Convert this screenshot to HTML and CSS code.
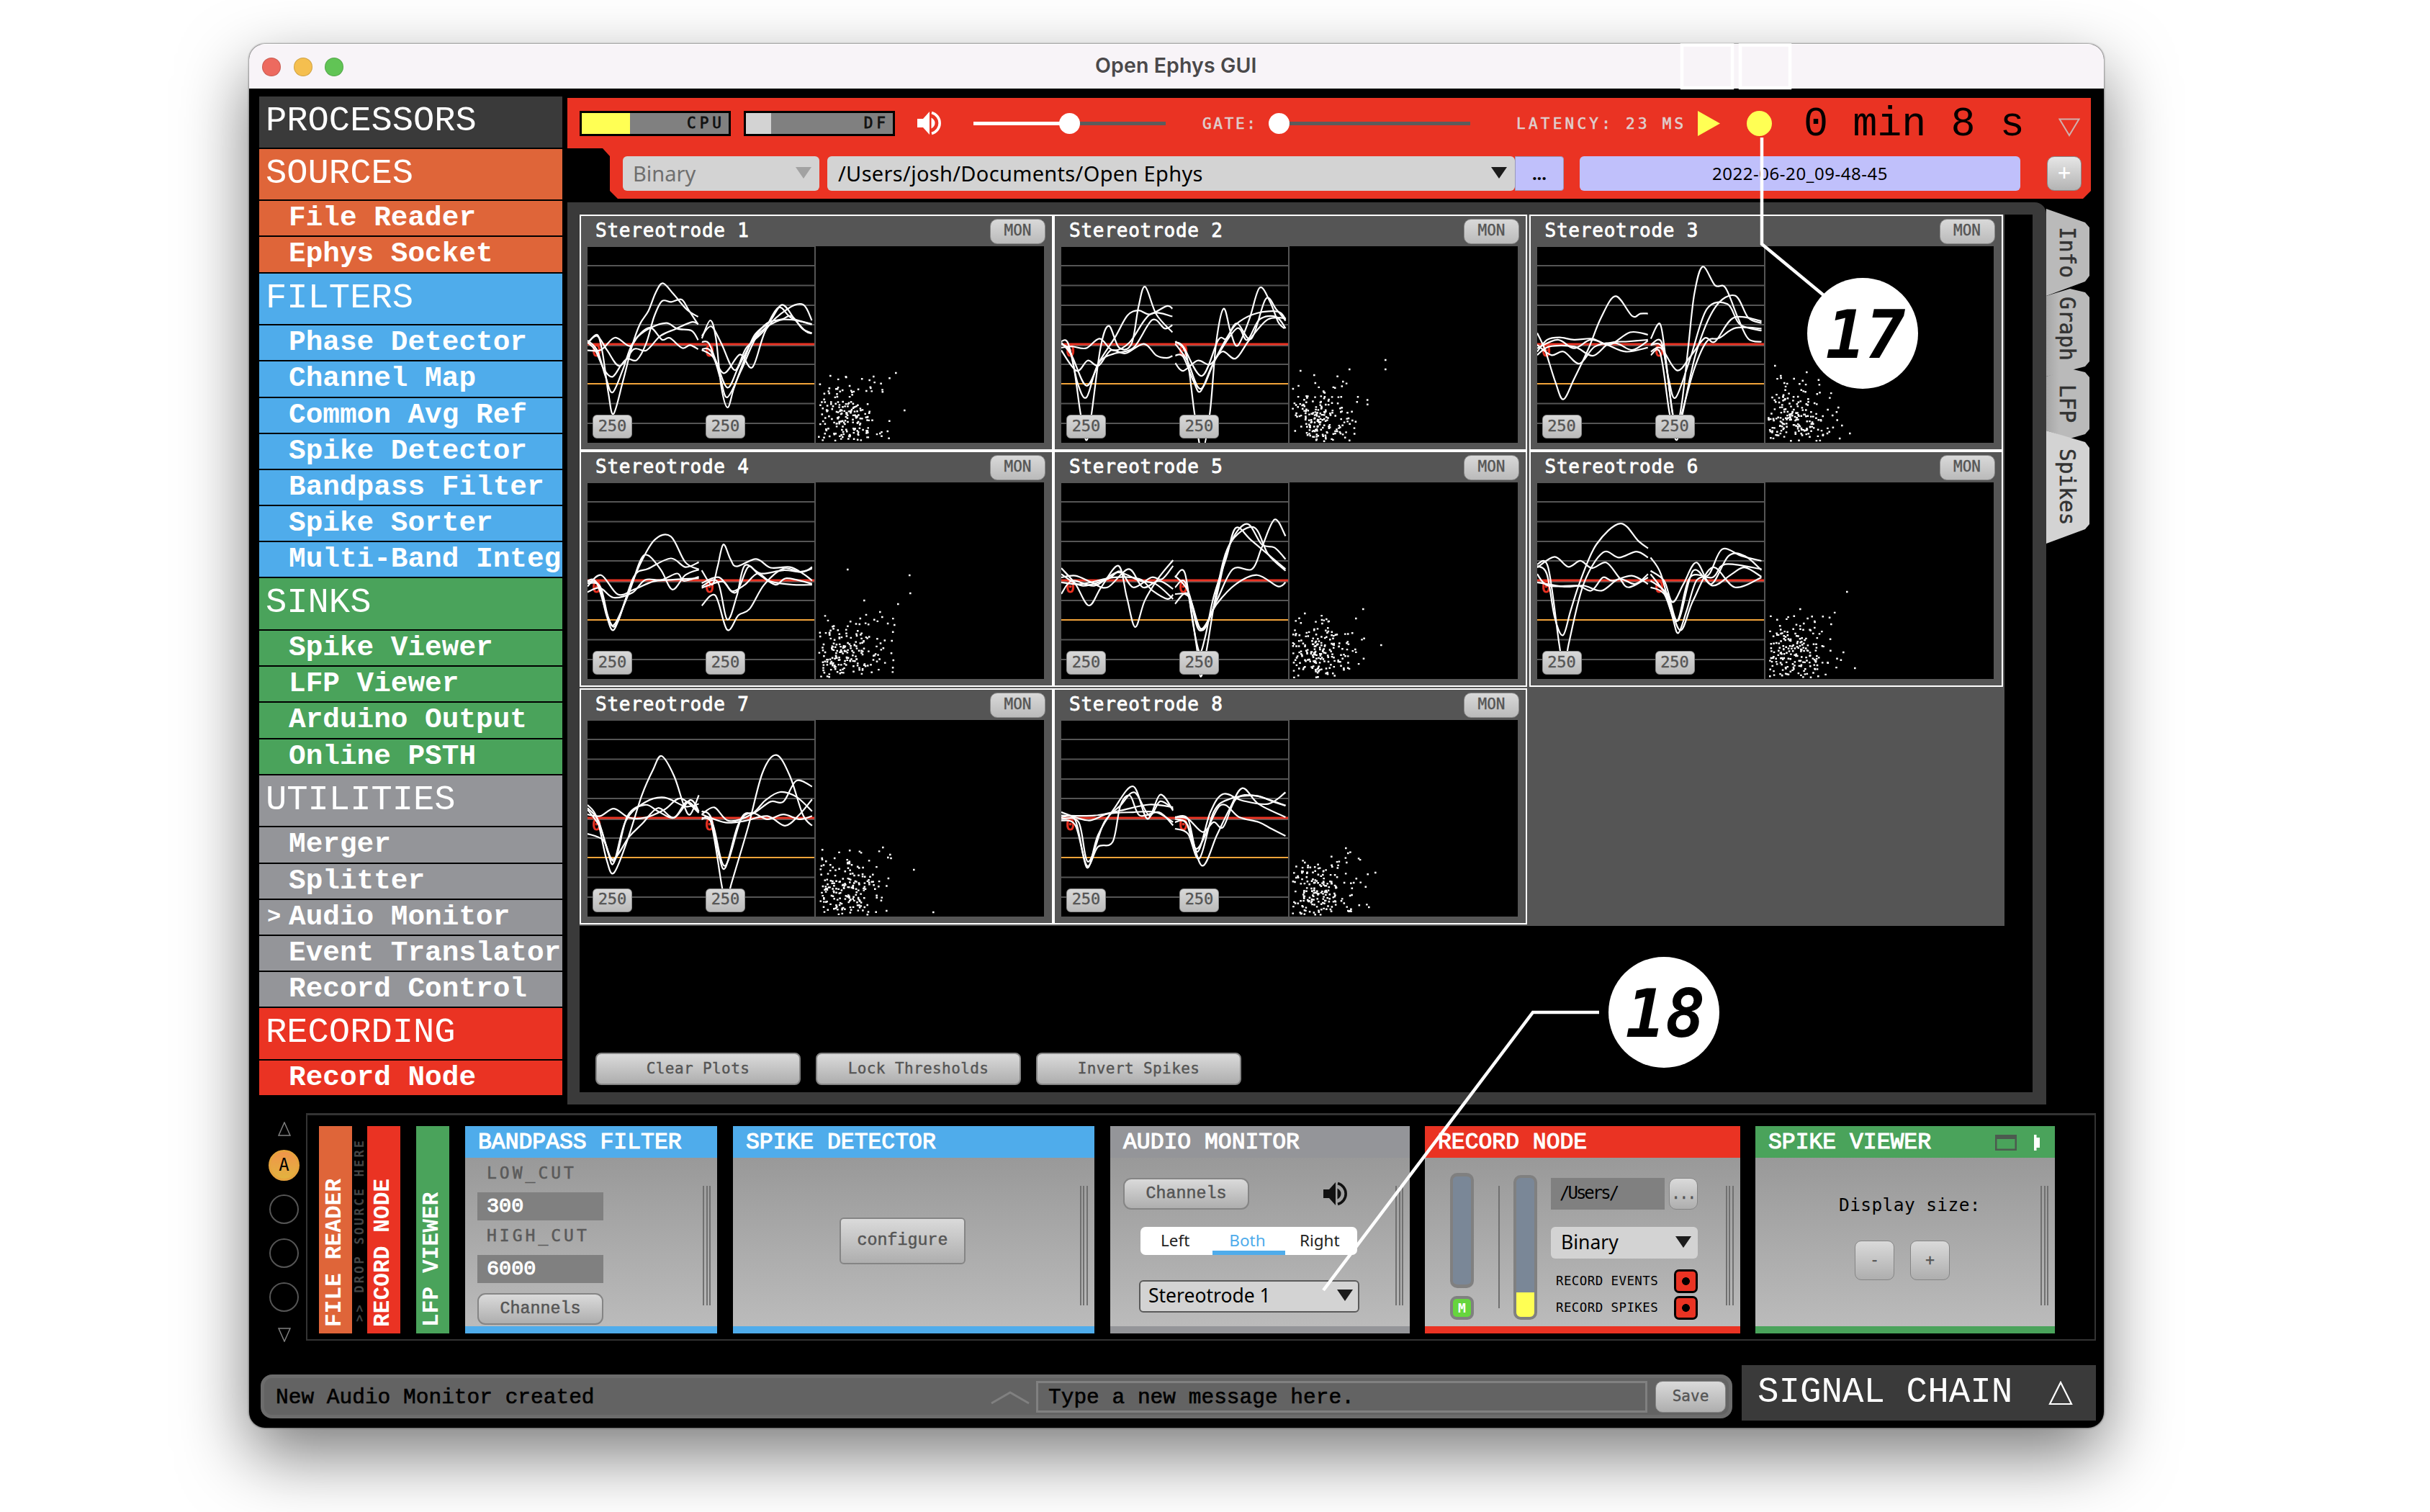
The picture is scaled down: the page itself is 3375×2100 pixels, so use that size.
FILE: index.html
```html
<!DOCTYPE html>
<html lang="en">
<head>
<meta charset="utf-8">
<title>Open Ephys GUI</title>
<link rel="stylesheet" href="styles.css">
</head>
<body>
<div class="window">
  <header class="titlebar">
    <span class="light close"></span><span class="light minimize"></span><span class="light zoom"></span>
    <h1 class="window-title">Open Ephys GUI</h1>
  </header>

  <div class="workspace">
    <nav class="processors">
      <div class="group heading">PROCESSORS</div>
      <div class="group sources">SOURCES</div>
      <div class="item sources">File Reader</div>
      <div class="item sources">Ephys Socket</div>
      <div class="group filters">FILTERS</div>
      <div class="item filters">Phase Detector</div>
      <div class="item filters">Channel Map</div>
      <div class="item filters">Common Avg Ref</div>
      <div class="item filters">Spike Detector</div>
      <div class="item filters">Bandpass Filter</div>
      <div class="item filters">Spike Sorter</div>
      <div class="item filters">Multi-Band Integ</div>
      <div class="group sinks">SINKS</div>
      <div class="item sinks">Spike Viewer</div>
      <div class="item sinks">LFP Viewer</div>
      <div class="item sinks">Arduino Output</div>
      <div class="item sinks">Online PSTH</div>
      <div class="group utilities">UTILITIES</div>
      <div class="item utilities">Merger</div>
      <div class="item utilities">Splitter</div>
      <div class="item utilities selected"><span class="caret">&gt;</span>Audio Monitor</div>
      <div class="item utilities">Event Translator</div>
      <div class="item utilities">Record Control</div>
      <div class="group recording">RECORDING</div>
      <div class="item recording">Record Node</div>
    </nav>

    <main class="main">
      <section class="control">
        <div class="control-row">
          <div class="meter cpu"><i class="meter-fill"></i>CPU</div>
          <div class="meter disk"><i class="meter-fill"></i>DF</div>
          <svg class="speaker" viewBox="0 0 34 34"><path d="M0 11h8l9-10v32L8 23H0z" fill="currentColor"/><path d="M19.500 9.500q5 2.500 5 7.500t-5 7.500z" fill="currentColor"/><path d="M20 2.500a15 15 0 0 1 0 29" fill="none" stroke="currentColor" stroke-width="3.600"/></svg>
          <div class="slider volume"><i class="knob"></i></div>
          <span class="tiny gate">GATE:</span>
          <div class="slider gate-slider"><i class="knob"></i></div>
          <span class="tiny latency">LATENCY: 23 MS</span>
          <svg class="play" viewBox="0 0 31 35"><path d="M0 0L31 17.500L0 35z" fill="#ffff54"/></svg>
          <i class="record"></i>
          <span class="clock">0 min 8 s</span>
          <svg class="collapse" viewBox="0 0 30 26"><path d="M1.500 1.500h27L15 24z" fill="none" stroke="#d0b0ac" stroke-width="2"/></svg>
        </div>
        <div class="control-row files">
          <div class="combo format">Binary<i class="arrow"></i></div>
          <div class="combo path">/Users/josh/Documents/Open Ephys<i class="arrow"></i></div>
          <div class="browse">...</div>
          <div class="filename">2022-06-20_09-48-45</div>
          <div class="add">+</div>
        </div>
      </section>

      <div class="viewer">
        <section class="canvas">
          <div class="plots" id="plots"></div>
          <div class="plot-actions">
            <button class="btn wide">Clear Plots</button>
            <button class="btn wide">Lock Thresholds</button>
            <button class="btn wide">Invert Spikes</button>
          </div>
        </section>
        <div class="tabs">
          <div class="tab info">Info</div>
          <div class="tab graph">Graph</div>
          <div class="tab lfp">LFP</div>
          <div class="tab spikes">Spikes</div>
        </div>
      </div>
    </main>
  </div>

  <section class="chain">
    <div class="chain-nav">
      <svg class="nav-arrow" viewBox="0 0 18 20"><path d="M9 1L17 19H1z"/></svg>
      <span class="slot active">A</span>
      <span class="slot"></span>
      <span class="slot"></span>
      <span class="slot"></span>
      <svg class="nav-arrow" viewBox="0 0 18 20"><path d="M1 1H17L9 19z"/></svg>
    </div>
    <div class="editors">
      <div class="strip sources">FILE READER</div>
      <div class="drop">&gt;&gt; DROP SOURCE HERE</div>
      <div class="strip recording">RECORD NODE</div>
      <div class="strip sinks lfp-strip">LFP VIEWER</div>

      <article class="editor bandpass">
        <h2 class="editor-title filters">BANDPASS FILTER</h2>
        <div class="editor-body">
          <div class="params">
            <label class="param-label">LOW_CUT</label>
            <div class="field">300</div>
            <label class="param-label second">HIGH_CUT</label>
            <div class="field">6000</div>
            <button class="btn techno channels">Channels</button>
          </div>
          <i class="grip"></i>
        </div>
        <div class="editor-foot filters"></div>
      </article>

      <article class="editor detector">
        <h2 class="editor-title filters">SPIKE DETECTOR</h2>
        <div class="editor-body">
          <button class="btn techno configure">configure</button>
          <i class="grip"></i>
        </div>
        <div class="editor-foot filters"></div>
      </article>

      <article class="editor monitor">
        <h2 class="editor-title utilities">AUDIO MONITOR</h2>
        <div class="editor-body">
          <div class="monitor-controls">
            <div class="monitor-top">
              <button class="btn techno channels">Channels</button>
              <svg class="speaker dark" viewBox="0 0 34 34"><path d="M0 11h8l9-10v32L8 23H0z" fill="currentColor"/><path d="M19.500 9.500q5 2.500 5 7.500t-5 7.500z" fill="currentColor"/><path d="M20 2.500a15 15 0 0 1 0 29" fill="none" stroke="currentColor" stroke-width="3.600"/></svg>
            </div>
            <div class="toggle"><span>Left</span><span class="on">Both</span><span>Right</span></div>
            <div class="combo electrode">Stereotrode 1<i class="arrow"></i></div>
          </div>
          <i class="grip"></i>
        </div>
        <div class="editor-foot utilities"></div>
      </article>

      <article class="editor recorder">
        <h2 class="editor-title recording">RECORD NODE</h2>
        <div class="editor-body">
          <div class="buffer-col"><div class="buffer main-buffer"></div><div class="monitor-m">M</div></div>
          <i class="rule"></i>
          <div class="buffer disk-buffer"></div>
          <div class="record-settings">
            <div class="path-row"><div class="record-path">/Users/</div><button class="btn dots">...</button></div>
            <div class="combo small-format">Binary<i class="arrow"></i></div>
            <div class="check-row"><span>RECORD EVENTS</span><i class="rec-toggle"></i></div>
            <div class="check-row last"><span>RECORD SPIKES</span><i class="rec-toggle"></i></div>
          </div>
          <i class="grip"></i>
        </div>
        <div class="editor-foot recording"></div>
      </article>

      <article class="editor spike-viewer">
        <h2 class="editor-title sinks">SPIKE VIEWER
          <svg class="view-icons" viewBox="0 0 64 22"><path d="M0 0h30v22H0z" fill="#4c5a4f"/><path d="M2.500 6h25v13.500h-25z" fill="#4aa35b"/><path d="M54 0h3.500v4h4.500v14h-4.500v4H54z" fill="#fff"/></svg>
        </h2>
        <div class="editor-body">
          <div class="display-size">
            <span class="size-label">Display size:</span>
            <div class="size-buttons"><button class="btn step">-</button><button class="btn step">+</button></div>
          </div>
          <i class="grip"></i>
        </div>
        <div class="editor-foot sinks"></div>
      </article>
    </div>
  </section>

  <footer class="bottom">
    <div class="messages">
      <span class="status">New Audio Monitor created</span>
      <svg class="chevron" viewBox="0 0 54 20"><path d="M1 18L27 3L53 18" fill="none" stroke="#808080" stroke-width="3"/></svg>
      <div class="message-input">Type a new message here.</div>
      <button class="btn save">Save</button>
    </div>
    <div class="signal-chain">SIGNAL CHAIN
      <svg class="expand" viewBox="0 0 34 34"><path d="M17 2L32 32H2z" fill="none" stroke="#fff" stroke-width="2.200"/></svg>
    </div>
  </footer>
</div>

<!-- numbered callouts drawn above the window -->
<svg class="callouts" viewBox="0 0 3375 2100">
  <g fill="none" stroke="#fff" stroke-width="4.500">
    <rect x="2336" y="62.500" width="70" height="59.500"/>
    <rect x="2417" y="62.500" width="69" height="59.500"/>
    <path d="M2447 191V339L2534 411"/>
    <path d="M1838 1792L2129 1406H2221"/>
  </g>
  <circle cx="2587" cy="463" r="77" fill="#fff"/>
  <circle cx="2311" cy="1406" r="77" fill="#fff"/>
  <text x="2591" y="497" class="callout-num">17</text>
  <text x="2313" y="1440" class="callout-num">18</text>
</svg>
<script src="plots.js"></script>
</body>
</html>
```
FILE: plots.js
```js
// Each electrode has its own plot units (view box) and the recent waveforms
// of its two channels, as x,y samples in those units.
const electrodes = [
  { box: [37, 159, 726, 816], far: [[110, 176], [79, 181], [19, 180], [41, 182], [75, 197], [122, 228]], traces: [
    '37,560 68,525 85,600 104,770 120,855 150,720 180,570 205,480 232,425 255,350 278,310 312,355 355,420 391,450',
    '37,548 68,590 95,700 117,765 150,670 182,560 235,495 275,545 300,538 340,580 365,568 391,585',
    '37,590 80,588 125,537 172,572 200,530 240,495 290,476 325,500 370,508 391,547',
    '37,556 62,590 90,670 117,700 145,650 165,625 195,630 225,560 250,450 275,385 305,388 338,378 360,420 391,482',
    '37,560 68,530 100,590 140,655 185,585 225,590 270,530 320,500 370,472 391,480',
    '403,540 430,465 448,540 465,740 485,828 505,750 530,660 570,530 620,470 660,400 700,460 735,510 755,520',
    '403,530 433,490 465,560 508,672 545,580 600,510 648,412 690,455 755,480',
    '403,555 425,560 450,640 485,745 520,660 565,550 610,478 660,460 690,447 725,500 755,518',
    '403,585 430,590 473,685 525,607 565,660 610,500 680,415 728,400 755,465',
    '403,588 440,620 463,710 485,785 530,670 580,530 640,470 690,462 755,482'] },
  { box: [425, 848, 549, 762], far: [[132, 158], [132, 171], [82, 171], [73, 188], [33, 179], [14, 173]], traces: [
    '425,1225 450,1270 472,1500 486,1600 498,1500 520,1240 540,1155 565,1240 595,1225 612,1080 628,1003 655,1110 694,1180',
    '425,1215 442,1225 465,1380 486,1433 512,1310 555,1200 585,1115 612,1095 640,1110 680,1078 694,1088',
    '425,1250 462,1330 489,1290 515,1310 545,1250 580,1262 625,1225 655,1270 680,1280 694,1272',
    '425,1240 450,1235 485,1242 518,1205 550,1250 590,1220 640,1110 694,1118',
    '425,1220 450,1270 486,1388 520,1290 555,1262 600,1240 645,1132 675,1165 694,1152',
    '701,1215 728,1270 748,1500 766,1640 785,1490 800,1220 818,1088 835,1180 852,1232 880,1130 905,1007 930,1060 950,1140 965,1165',
    '701,1220 720,1235 765,1350 805,1210 825,1205 850,1145 885,1205 920,1050 945,1090 968,1135',
    '701,1300 720,1330 755,1290 785,1305 815,1255 847,1282 880,1210 925,1130 968,1125',
    '701,1270 720,1275 745,1370 762,1410 790,1310 830,1190 855,1140 900,1105 950,1100 968,1130',
    '701,1225 730,1290 762,1400 800,1280 850,1165 875,1210 905,1130 945,1120 968,1165'] },
  { box: [61, 642, 547, 576], far: [[12, 166], [56, 175], [20, 180], [25, 190], [105, 249], [116, 260], [100, 224]], traces: [
    '61,895 80,945 105,1040 124,1090 150,1030 185,940 215,850 250,787 290,845 310,838 328,838',
    '61,950 85,915 115,908 150,915 195,912 235,930 285,893 328,900',
    '61,930 95,960 125,950 163,985 200,935 250,925 290,945 328,918',
    '61,960 90,935 150,935 195,962 235,925 280,920 328,915',
    '61,940 110,915 150,940 190,915 230,930 275,950 328,938',
    '335,912 357,868 370,960 385,1110 397,1170 410,1100 425,940 440,780 460,700 490,755 515,762 545,850 570,912 602,921',
    '335,930 360,920 378,1030 395,1085 430,970 470,825 520,810 550,870 602,888',
    '335,950 360,940 398,1005 430,965 465,910 490,920 535,850 602,860',
    '335,960 358,955 380,1130 397,1210 412,1130 445,950 490,820 538,785 570,850 602,866',
    '335,930 365,945 387,1130 397,1180 410,1130 440,1000 470,920 500,910 540,880 602,882'] },
  { box: [81, 159, 705, 609], far: [[43, 121], [129, 129], [130, 154], [66, 164], [113, 169], [88, 180], [91, 187], [108, 198]], traces: [
    '81,465 115,475 140,570 163,615 200,520 245,410 290,335 340,325 385,405 427,427',
    '81,470 120,480 145,575 165,598 210,500 245,400 270,384 310,430 345,490 385,445 427,428',
    '81,480 123,445 175,505 225,490 285,465 335,460 427,455',
    '81,498 120,485 162,515 220,500 260,460 310,460 360,440 380,463 427,450',
    '81,462 110,470 150,590 175,590 225,450 270,425 340,393 385,420 427,405',
    '436,430 468,475 485,420 503,350 525,395 545,418 605,395 650,422 710,420 750,440 779,462',
    '436,480 485,465 515,583 545,510 570,415 620,440 690,430 750,435 779,420',
    '436,540 478,508 515,615 550,570 585,550 630,475 690,425 740,435 779,425',
    '436,470 490,452 540,500 580,420 610,440 665,475 700,455 779,472',
    '436,485 500,465 530,495 570,475 610,440 650,465 720,475 779,475'] },
  { box: [38, 155, 353, 592], far: [[101, 176], [20, 182], [91, 189], [50, 190], [126, 226], [90, 232]], traces: [
    '38,412 60,460 81,525 100,470 127,405 140,500 153,590 168,510 190,440 212,388',
    '38,490 55,450 90,465 125,425 160,450 185,460 212,505',
    '38,430 70,465 110,445 130,422 150,470 178,440 195,445 212,405',
    '38,440 60,435 85,455 110,470 143,415 165,470 190,450 212,475',
    '38,455 70,460 120,440 160,445 180,480 203,505 212,492',
    '215,440 230,425 243,580 253,665 262,620 275,500 295,380 310,290 335,330 387,415',
    '215,520 235,490 253,600 275,530 295,370 312,300 330,280 350,340 370,350 387,385',
    '215,470 232,460 248,640 255,740 265,650 280,480 300,340 337,288 360,370 387,420',
    '215,490 237,500 257,600 280,510 305,415 335,415 350,350 370,265 387,315',
    '215,435 235,480 255,595 280,520 310,460 343,433 375,467 387,455'] },
  { box: [778, 155, 352, 592], far: [[112, 152], [47, 176], [52, 196], [67, 193], [90, 197], [107, 236], [123, 258]], traces: [
    '778,405 793,430 805,560 818,615 830,540 845,450 870,340 907,277 935,330 950,352',
    '778,400 795,410 812,640 820,720 827,640 850,460 880,365 905,380 932,362 950,380',
    '778,410 805,378 826,408 845,390 863,412 885,395 905,440 920,470 950,440',
    '778,430 795,465 840,465 862,480 880,440 895,450 925,435 950,460',
    '778,455 820,468 850,465 878,480 905,445 930,460 950,430',
    '954,380 970,430 988,560 997,608 1010,540 1025,450 1045,430 1065,355 1095,375 1126,390',
    '954,420 975,450 988,515 1005,460 1025,395 1048,460 1075,375 1100,375 1126,418',
    '954,430 980,500 1000,600 1020,510 1050,410 1085,470 1126,440',
    '954,470 975,490 995,572 1015,440 1050,440 1070,400 1126,415',
    '954,450 980,490 997,570 1020,420 1050,465 1080,430 1100,410 1126,438'] },
  { box: [81, 898, 705, 610], far: [[92, 177], [102, 187], [135, 208], [162, 267], [99, 191], [97, 265]], traces: [
    '81,1160 110,1200 140,1330 163,1372 205,1270 250,1130 285,1050 311,1008 350,1070 380,1160 400,1190 427,1130',
    '81,1190 120,1195 163,1172 210,1200 260,1200 320,1175 370,1140 427,1185',
    '81,1170 115,1210 145,1310 163,1340 200,1210 260,1152 320,1137 385,1165 427,1157',
    '81,1250 130,1270 160,1330 210,1260 250,1220 300,1170 350,1200 400,1145 427,1180',
    '81,1175 120,1230 163,1335 205,1195 260,1160 300,1180 350,1200 390,1150 427,1182',
    '436,1205 465,1215 498,1410 512,1470 527,1410 580,1230 625,1060 668,1005 710,1070 750,1190 779,1225',
    '436,1190 475,1168 520,1210 590,1190 635,1145 680,1120 730,1135 779,1180',
    '436,1180 465,1200 490,1320 510,1355 550,1220 590,1185 640,1205 690,1190 740,1205 779,1195',
    '436,1200 470,1220 508,1350 560,1200 600,1185 650,1150 690,1150 730,1085 779,1103',
    '436,1190 510,1215 570,1210 640,1195 695,1225 740,1190 779,1143'] },
  { box: [38, 873, 353, 593], far: [[77, 178], [80, 185], [78, 198], [118, 212], [20, 198], [109, 260]], traces: [
    '38,1165 60,1175 78,1318 95,1220 120,1140 150,1072 172,1170 192,1097 212,1145',
    '38,1175 60,1190 78,1312 95,1255 118,1240 130,1130 145,1100 160,1160 190,1150 212,1190',
    '38,1150 80,1175 110,1155 150,1150 185,1150 212,1180',
    '38,1170 65,1180 80,1300 105,1180 130,1130 152,1090 175,1160 192,1117 212,1140',
    '38,1160 90,1160 130,1145 175,1127 212,1135',
    '215,1170 235,1190 257,1312 280,1220 300,1140 320,1077 345,1125 387,1165',
    '215,1165 235,1170 250,1270 270,1150 290,1095 320,1115 360,1125 387,1090',
    '215,1200 235,1215 253,1290 275,1150 300,1110 340,1100 370,1120 387,1130',
    '215,1165 235,1170 258,1210 275,1180 290,1195 310,1110 340,1100 387,1130',
    '215,1180 232,1180 250,1260 285,1130 315,1165 345,1180 365,1200 387,1222'] }
];

// Smooth curve through the samples (Catmull-Rom to cubic Bezier).
function curve(samples) {
  const p = samples.split(' ').map(s => s.split(',').map(Number));
  let d = 'M' + p[0];
  for (let i = 0; i < p.length - 1; i++) {
    const a = p[i - 1] || p[i], b = p[i], c = p[i + 1], e = p[i + 2] || c;
    d += `C${b[0] + (c[0] - a[0]) / 6},${b[1] + (c[1] - a[1]) / 6} ${c[0] - (e[0] - b[0]) / 6},${c[1] - (e[1] - b[1]) / 6} ${c}`;
  }
  return d;
}

function generator(seed) {
  return () => {
    seed = (seed * 1664525 + 1013904223) % 4294967296;
    return seed / 4294967296;
  };
}

// Peak-amplitude cloud: dense near the origin, thinning outwards.
function cloud(seed, far) {
  const rnd = generator(seed);
  const normal = () => Math.sqrt(-2 * Math.log(rnd() + 1e-9)) * Math.cos(6.28318 * rnd());
  let d = far.map(([x, y]) => `M${x} ${y}h2.6`).join('');
  let n = 0;
  while (n < 195) {
    const spread = n % 3 ? 22 : 38;
    const x = 38 + normal() * spread;
    const y = 32 + normal() * spread;
    if (x < 3 || x > 108 || y < 1 || y > 92) continue;
    d += `M${x.toFixed(1)} ${(272 - y).toFixed(1)}h2.6`;
    n++;
  }
  return d;
}

const levels = [26, 53.5, 81, 108, 137, 163, 217.5, 245];
document.getElementById('plots').innerHTML = electrodes.map((e, i) => `
  <section class="plot">
    <header class="plot-head"><span class="plot-name">Stereotrode ${i + 1}</span><button class="btn mon">MON</button></header>
    <div class="plot-body">
      <div class="wave">
        <svg class="grid" viewBox="0 0 315 272">
          ${levels.map(y => `<path d="M0 ${y}H315" stroke="#555" stroke-width="2.2"/>`).join('')}
          <path d="M0 190H315" stroke="#f2a33a" stroke-width="2"/>
          <path d="M0 135H315" stroke="#ea3323" stroke-width="3.2"/>
          <text class="zero" x="6" y="152">0</text><text class="zero" x="163" y="152">0</text>
        </svg>
        <svg class="traces" viewBox="${e.box.join(' ')}" preserveAspectRatio="none">
          ${e.traces.map(t => `<path d="${curve(t)}"/>`).join('')}
        </svg>
        <div class="ranges"><button class="btn range">250</button><button class="btn range">250</button></div>
      </div>
      <svg class="projection" viewBox="0 0 317 273"><path d="${cloud(i * 977 + 31, e.far)}"/></svg>
    </div>
  </section>`).join('');
```
FILE: styles.css
```css
* { box-sizing: border-box; }
body { margin: 0; background: #fff; width: 3375px; height: 2100px; overflow: hidden; padding: 61px 0 0 346px; position: relative; }
h1, h2 { margin: 0; font-weight: inherit; }
i { display: block; font-style: normal; }
svg { display: block; flex: none; }
button { border: 0; padding: 0; font: inherit; color: inherit; }

.window { width: 2576px; height: 1922px; background: #000; border-radius: 22px; overflow: hidden; display: flex; flex-direction: column;
  box-shadow: 0 0 2px 1px rgba(0,0,0,.35), 0 38px 95px rgba(0,0,0,.52); }

.titlebar { height: 62px; flex: none; background: #f8f4f8; display: flex; align-items: center; padding-left: 18px; gap: 17.500px; border-top: 1px solid #fff; }
.light { width: 26px; height: 26px; border-radius: 50%; border: 1px solid rgba(0,0,0,.15); }
.close { background: #ed6a5f; } .minimize { background: #f5bf4f; } .zoom { background: #61c455; }
.window-title { flex: 1; text-align: center; margin-right: 150px; font: 600 28.500px/58px Inter, sans-serif; color: #4a484a; letter-spacing: .1px; padding-bottom: 3px; }

.workspace { display: flex; padding: 11px 18px 0 14px; gap: 7px; height: 1423px; flex: none; }

.sources { background: #df6539; } .filters { background: #4faceb; } .sinks { background: #4aa35b; }
.utilities { background: #949599; } .recording { background: #ea3323; } .heading { background: #3a3a3a; }

.processors { width: 421px; flex: none; display: flex; flex-direction: column; gap: 2px; color: #fff; font-family: "Liberation Mono", monospace; }
.group { height: 70.600px; line-height: 68px; font-size: 48.800px; padding-left: 9px; flex: none; }
.item { height: 48.200px; line-height: 47px; font-size: 39.400px; font-weight: bold; padding-left: 41px; white-space: pre; flex: none; overflow: hidden; }
.item.selected { padding-left: 11px; display: flex; }
.caret { width: 30px; font-size: 32px; }

.main { flex: 1; padding-top: 2px; display: flex; flex-direction: column; }

.control { height: 140px; background: #ea3323; clip-path: polygon(0 0, 100% 0, 100% 129px, 2105px 100%, 70px 100%, 59px 129px, 59px 81px, 49px 70px, 0 70px); }
.control-row { display: flex; align-items: center; height: 70px; padding-left: 17px; }
.meter { width: 210px; height: 35px; border: 3px solid #000; background: #808080; display: flex; align-items: center; justify-content: flex-end; position: relative;
  font: 21px/31px "DejaVu Sans Mono", monospace; -webkit-text-stroke: .8px #111; letter-spacing: 5px; padding-right: 5px; color: #111; }
.meter-fill { height: 29px; margin-right: auto; }
.cpu .meter-fill { width: 67px; background: #ffff54; }
.disk .meter-fill { width: 35px; background: #d3d3d3; }
.disk { margin-left: 18px; }
.speaker { width: 34px; height: 34px; color: #fff; margin-left: 31px; }
.slider { width: 267px; height: 5px; background: #5c5c5c; display: flex; align-items: center; }
.knob { width: 29px; height: 29px; border-radius: 50%; background: #fff; flex: none; }
.volume { margin-left: 44px; background: linear-gradient(90deg, #fff 50%, #5c5c5c 50%); }
.volume .knob { margin-left: 119px; }
.gate-slider .knob { margin-left: -14px; }
.tiny { font: 21px/24px "DejaVu Sans Mono", monospace; color: #dfcfcd; -webkit-text-stroke: .6px #dfcfcd; white-space: pre; padding-top: 2px; }
.gate { margin-left: 51px; width: 75px; letter-spacing: 2.700px; }
.gate-slider { margin-left: 31px; width: 266px; }
.latency { margin-left: 64px; width: 237px; letter-spacing: 4.250px; }
.play { width: 31px; height: 35px; margin-left: 15px; }
.record { width: 35px; height: 35px; border-radius: 50%; background: #ffff54; margin-left: 37px; }
.clock { font: 56.800px/70px "Liberation Mono", monospace; margin-left: 44px; width: 307px; white-space: pre; color: #000; padding-top: 4px; }
.collapse { width: 30px; height: 26px; margin: 12px 0 0 47px; }

.files { height: 48px; margin-top: 11px; padding-left: 77px; }
.combo { background: #d3d3d3; border-radius: 6px; display: flex; align-items: center; justify-content: space-between; color: #000; font-family: "Noto Sans", sans-serif; white-space: pre; }
.arrow { width: 22px; height: 16px; background: #1c1c1c; clip-path: polygon(0 0, 100% 0, 50% 100%); }
.format { width: 273px; height: 48px; padding: 0 11px 2px 14px; font-size: 29px; color: #6f6f6f; }
.format .arrow { background: #a2a2a2; }
.path { width: 955px; height: 48px; margin-left: 11px; padding: 0 11px 2px 15px; font-size: 29px; letter-spacing: .320px; }
.browse { width: 68px; height: 48px; background: #c0c0fb; border: 1px solid #9a9ab8; border-radius: 0 4px 4px 0; text-align: center; font: bold 24px/46px "Noto Sans", sans-serif; }
.filename { width: 612px; height: 48px; margin-left: 22px; background: #c0c0fb; border-radius: 6px; text-align: center; font: 24px/47px "Noto Sans", sans-serif; letter-spacing: .550px; color: #000; }
.add { width: 48px; height: 48px; margin-left: 37px; border-radius: 10px; background: linear-gradient(#e6e6e6, #b4b4b4); border: 1px solid #8a8a8a; color: #fff; text-align: center; font: 30px/44px "DejaVu Sans Mono", monospace; }

.viewer { display: flex; margin-top: 5px; height: 1253px; }
.canvas { width: 2054px; height: 1253px; border: solid #3a3a3a; border-width: 17px 19px 17px 17px; border-top-right-radius: 16px; background: #000; display: flex; flex-direction: column; justify-content: space-between; }
.plots { width: 1979px; height: 988px; background: #555; display: grid; grid-template-columns: 658px 660.500px 658px; grid-template-rows: 328px 329.500px 328px; align-items: start; }
.plot { width: 658px; height: 328px; border: 2.500px solid #fff; }
.plot-head { height: 42px; display: flex; justify-content: space-between; padding: 4px 9px 0 20px; }
.plot-name { font: 26px/33px "DejaVu Sans Mono", monospace; letter-spacing: .780px; color: #fff; -webkit-text-stroke: .8px #fff; }
.btn { display: block; background: linear-gradient(#dadada, #aeaeae); border: 2px solid #858585; border-radius: 8px; color: #555; text-align: center; font: 21px/1 "DejaVu Sans Mono", monospace; -webkit-text-stroke: .4px #555; flex: none; }
.mon { width: 77px; height: 35px; border: 1px solid #8a8a8a; border-radius: 10px; background: linear-gradient(#d9d9d9, #bababa); padding-bottom: 2px; }
.plot-body { display: flex; padding-left: 9px; gap: 2px; align-items: flex-end; }
.wave { width: 315px; height: 272px; background: #000; display: grid; overflow: hidden; }
.wave > * { grid-area: 1 / 1; }
.grid, .traces { width: 315px; height: 272px; }
.traces path { fill: none; stroke: #fff; stroke-width: 2.200; vector-effect: non-scaling-stroke; }
.zero { font: 21px "DejaVu Sans Mono", monospace; fill: #ea3323; stroke: #ea3323; stroke-width: .8; }
.ranges { align-self: end; display: flex; gap: 102px; padding: 0 0 6px 7px; }
.range { width: 55px; height: 33px; border: 1px solid #8a8a8a; border-radius: 6px; background: linear-gradient(#d9d9d9, #bababa); padding-bottom: 2px; font-size: 22px; }
.projection { width: 317px; height: 273px; background: #000; }
.projection path { stroke: #fff; stroke-width: 2.400; }
.plot-actions { display: flex; gap: 21px; padding: 0 0 10px 22px; }
.wide { width: 285px; height: 45px; letter-spacing: .400px; }

.tabs { width: 60px; padding-top: 9px; color: #333; font: 29.500px/62px "DejaVu Sans Mono", monospace; -webkit-text-stroke: .5px #333; }
.tab { writing-mode: vertical-rl; width: 60px; background: #bababa; text-align: center; }
.info { height: 121px; clip-path: polygon(0 0, 54px 19px, 60px 26px, 60px 93px, 54px 101px, 0 121px); }
.graph { height: 122px; margin-top: -10px; clip-path: polygon(0 10px, 33px 0, 54px 5px, 60px 12px, 60px 101px, 54px 108px, 0 122px); background: linear-gradient(90deg, #a6a6a6, #bababa 30%); padding-bottom: 11px; }
.lfp { height: 97px; margin-top: -11px; clip-path: polygon(0 11px, 33px 0, 54px 5px, 60px 12px, 60px 84px, 54px 91px, 33px 97px, 0 86px); background: linear-gradient(90deg, #a6a6a6, #bababa 30%); }
.spikes { height: 157px; margin-top: -11px; background: #d3d3d3; clip-path: polygon(0 0, 54px 16px, 60px 24px, 60px 130px, 54px 137px, 0 157px); }

.chain { display: flex; height: 316px; flex: none; padding: 0 11px 0 26px; }
.chain-nav { width: 45px; margin-right: 8px; display: flex; flex-direction: column; align-items: center; padding-top: 12px; }
.nav-arrow { width: 18px; height: 20px; fill: none; stroke: #808080; stroke-width: 1.500; }
.slot { width: 41px; height: 41px; border: 2px solid #555; border-radius: 50%; margin-top: 20px; flex: none; }
.slot.active { width: 43px; height: 43px; margin-top: 19px; margin-bottom: -1px; background: linear-gradient(#f0954a, #e2b33f); border: 3px solid #e6a33d; text-align: center; font: 24px/37px "DejaVu Sans Mono", monospace; }
.chain-nav .nav-arrow:last-child { margin-top: 22px; }
.editors { width: 2486px; height: 316px; border: 2px solid #333; border-top-width: 3px; padding: 15px 0 0 16px; display: flex; }
.strip, .drop { writing-mode: vertical-rl; transform: rotate(180deg); white-space: pre; flex: none; }
.strip { width: 46px; height: 288px; color: #fff; font: bold 31px/44px "Liberation Mono", monospace; letter-spacing: .150px; padding-top: 9px; }
.drop { width: 21px; height: 288px; color: #444; font: bold 17px/21px "DejaVu Sans Mono", monospace; letter-spacing: 3.200px; padding-top: 16px; }
.lfp-strip { margin-left: 22px; }

.editor { height: 288px; margin-left: 22px; display: flex; flex-direction: column; flex: none; }
.bandpass { width: 350px; } .detector { width: 502px; } .monitor { width: 416px; }
.recorder { width: 438px; margin-left: 21px; } .spike-viewer { width: 416px; margin-left: 21px; }
.editor-title { height: 44px; padding: 2px 0 0 18px; color: #fff; font: 31.400px/44px "Liberation Mono", monospace; -webkit-text-stroke: 1.100px #fff; display: flex; align-items: center; justify-content: space-between; white-space: nowrap; }
.editor-body { height: 234px; background: linear-gradient(#999, #bbb); display: flex; }
.editor-foot { height: 10px; }
.grip { width: 11px; height: 166px; margin: 39px 9px 0 auto; flex: none; background: repeating-linear-gradient(90deg, #707070 0 2px, transparent 2px 4.500px); }
.techno { font: 23.300px/1 "Liberation Mono", monospace; -webkit-text-stroke: .5px #555; padding-top: 1px; }

.params { padding: 9px 0 0 17px; width: 200px; display: flex; flex-direction: column; }
.param-label { font: 23px/24px "DejaVu Sans Mono", monospace; letter-spacing: 4px; color: #5a5a5a; -webkit-text-stroke: .5px #5a5a5a; padding-left: 13px; height: 39px; }
.param-label.second { margin-top: 9px; height: 39px; }
.field { width: 175px; height: 39px; background: #808080; color: #fff; font: 28.500px/39px "Liberation Mono", monospace; -webkit-text-stroke: 1px #fff; padding-left: 13px; }
.params .channels { margin-top: 14px; }
.channels { width: 175px; height: 44px; border-radius: 11px; }
.configure { width: 175px; height: 65px; margin: 83px 0 0 148px; border-radius: 6px; }

.monitor-controls { padding: 28px 0 0 18px; width: 360px; }
.monitor-top { display: flex; align-items: center; }
.speaker.dark { color: #111; margin-left: 103px; }
.toggle { width: 301px; height: 39px; margin: 24px 0 0 24px; background: #fff; border-radius: 7px; overflow: hidden; display: flex; font: 22.500px/38px "Noto Sans", sans-serif; color: #222; text-align: center; }
.toggle span { flex: 1; padding-right: 4px; }
.toggle .on { color: #4faceb; border-bottom: 6px solid #4faceb; }
.electrode { width: 306px; height: 45px; margin: 35px 0 0 22px; border: 2px solid #5a5a5a; padding: 0 7px 3px 11px; font-size: 26.500px; }

.buffer-col { width: 33px; margin: 21px 0 0 35px; }
.buffer { width: 33px; border: 4px solid #808080; border-radius: 10px; background: #7a8797; }
.main-buffer { height: 160px; border-width: 5px 4px; }
.monitor-m { width: 33px; height: 33px; margin-top: 11px; border: 4px solid #808080; border-radius: 9px; background: #66d53d; color: #fff; text-align: center; font: bold 18px/25px "DejaVu Sans Mono", monospace; }
.rule { width: 2px; height: 170px; background: #707070; margin: 39px 0 0 34px; }
.disk-buffer { height: 201px; margin: 24px 0 0 19px; background: linear-gradient(#7a8797 82.500%, #ffff54 82.500%); }
.record-settings { width: 204px; margin: 28px 0 0 19px; }
.path-row { display: flex; justify-content: space-between; }
.record-path { width: 158px; height: 44px; background: #808080; padding-left: 12px; font: 24px/42px "DejaVu Sans Mono", monospace; letter-spacing: -3px; color: #000; }
.dots { width: 40px; height: 44px; border-width: 1px; letter-spacing: -1.500px; border-radius: 10px; }
.small-format { width: 204px; height: 44px; margin-top: 24px; padding: 0 9px 2px 14px; font-size: 26.500px; }
.check-row { display: flex; align-items: center; justify-content: space-between; margin-top: 15px; height: 33px; padding-left: 7px; font: 17.500px/33px "DejaVu Sans Mono", monospace; letter-spacing: .400px; color: #000; }
.check-row.last { margin-top: 4px; }
.rec-toggle { width: 33px; height: 33px; border: 3px solid #000; border-radius: 7px; background: radial-gradient(circle, #000 5px, #ea3323 5.800px); }

.view-icons { width: 64px; height: 22px; margin-right: 19px; }
.display-size { flex: 1; }
.size-label { display: block; margin: 51px 0 0 116px; font: 24.500px/30px "DejaVu Sans Mono", monospace; letter-spacing: .400px; color: #000; white-space: pre; }
.size-buttons { display: flex; gap: 22px; margin: 34px 0 0 138px; }
.step { width: 55px; height: 55px; border-width: 1px; border-radius: 9px; }
.display-size + .grip { margin-left: 0; }

.bottom { display: flex; align-items: flex-start; padding: 34px 11px 0 16px; flex: none; }
.messages { width: 2044px; height: 61px; margin-top: 13px; background: #636363; border: 5px solid #6c6c6c; border-radius: 16px; display: flex; align-items: center; padding: 0 4px 0 16px; flex: none; }
.status, .message-input { font: 29.500px/40px "Liberation Mono", monospace; color: #000; -webkit-text-stroke: .6px #000; white-space: pre; }
.status { width: 993px; padding-top: 2px; }
.chevron { width: 54px; height: 20px; margin-top: 2px; }
.message-input { width: 849px; height: 44px; margin-left: 9px; border: 3px solid #808080; padding-left: 14px; }
.save { width: 98px; height: 44px; margin-left: 11px; border-radius: 10px; border-width: 1px; }
.signal-chain { width: 492px; height: 77px; margin-left: 13px; background: #3a3a3a; color: #fff; display: flex; align-items: center; justify-content: space-between; padding: 0 32px 0 22px; font: 49.200px/79px "Liberation Mono", monospace; white-space: nowrap; }
.expand { width: 34px; height: 34px; }

.callouts { position: absolute; left: 0; top: 0; width: 3375px; height: 2100px; }
.callout-num { font: italic bold 92px "DejaVu Sans Mono", monospace; text-anchor: middle; fill: #000; }
```
